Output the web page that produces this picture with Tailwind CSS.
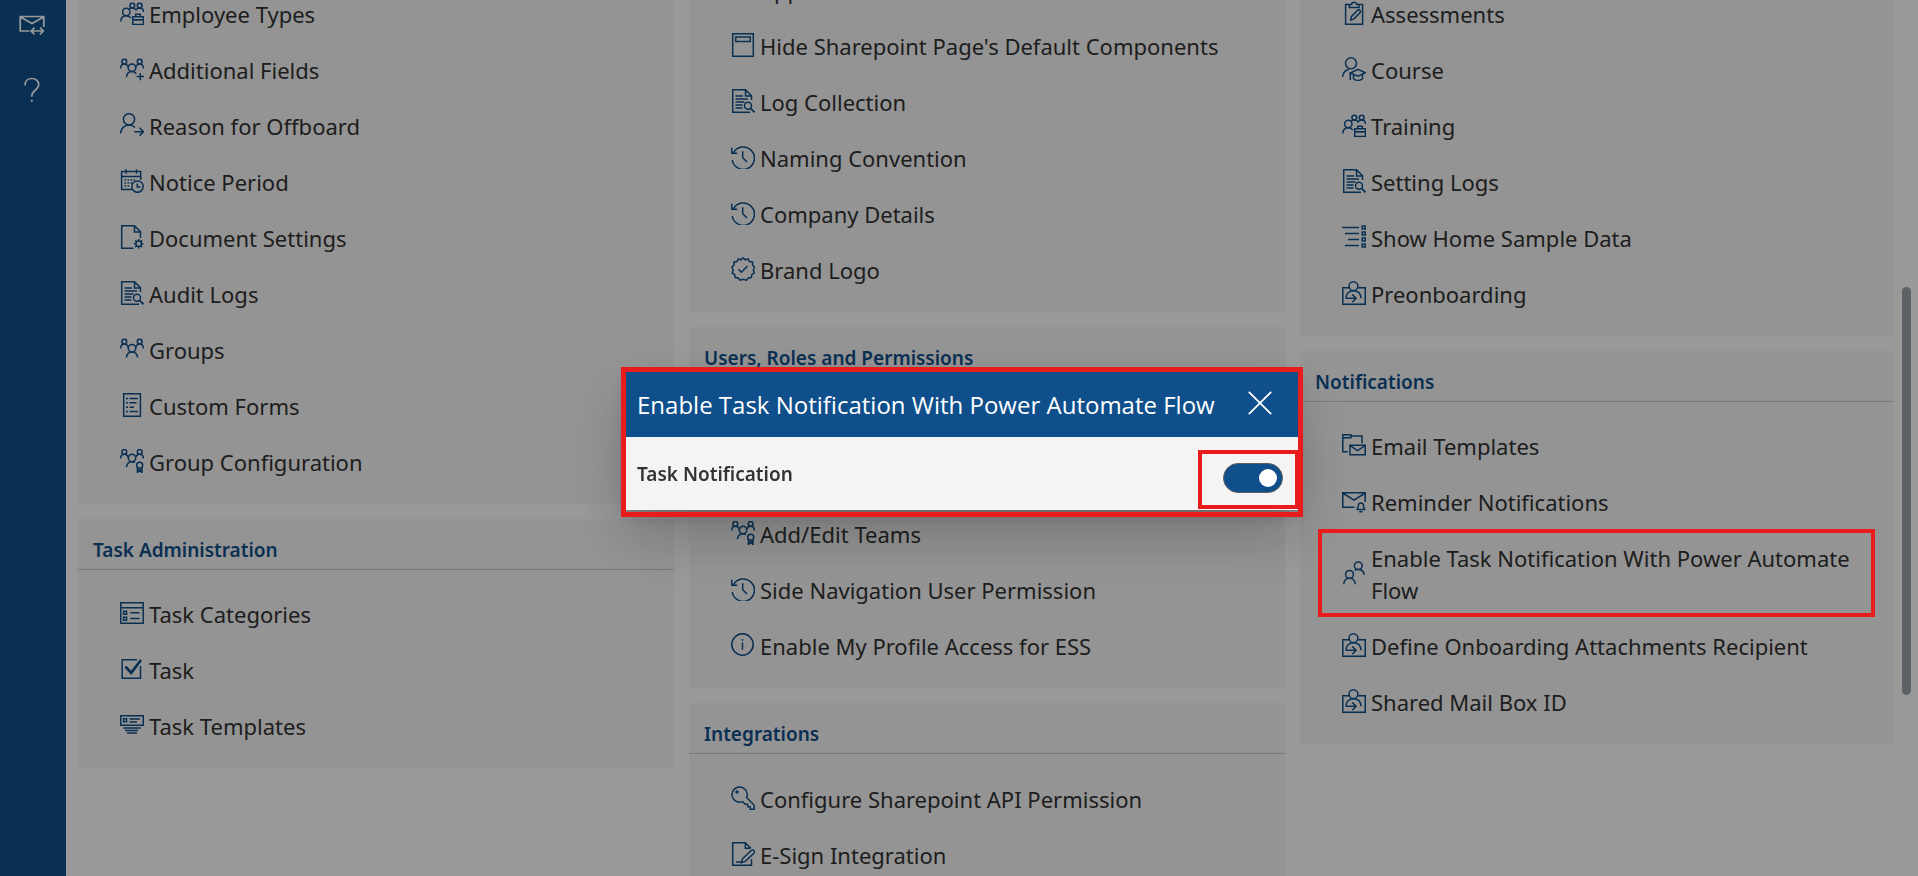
<!DOCTYPE html>
<html lang="en">
<head>
<meta charset="utf-8">
<meta name="viewport" content="width=device-width, initial-scale=1">
<title>Settings</title>
<script src="https://cdn.jsdelivr.net/npm/@tailwindcss/browser@4"></script>
</head>
<body class="h-screen overflow-hidden bg-white font-['Noto_Sans','Open_Sans',sans-serif] text-[#333]">

<svg class="hidden" aria-hidden="true">
  <symbol id="i-team-case" viewBox="0 0 24 24"><circle cx="12.3" cy="4.6" r="2.4"/><circle cx="19.7" cy="4.6" r="2.4"/><circle cx="6.3" cy="11" r="3.7"/><path d="M.6 20.6c.3-3.4 2.500-5.900 5.700-5.900 2 0 3.600.9 4.600 2.400M8.800 8.300C9.500 7.500 10.900 7 12.300 7c1.600 0 2.900.7 3.700 1.900C16.800 7.700 18.100 7 19.700 7c2.200 0 3.700 1.500 3.800 4M12.800 15.700h10.600v7.700H12.800zM15.700 15.500v-2.300h4.600v2.300M12.800 18.700h10.600M16.300 18v2M20 18v2"/></symbol>
  <symbol id="i-team" viewBox="0 0 24 24"><circle cx="4.300" cy="4.600" r="2.400"/><circle cx="19.700" cy="4.600" r="2.400"/><circle cx="12" cy="11.300" r="3.800"/><path d="M.6 11.500C.7 8.900 2.200 7 4.300 7c1.800 0 3.200 1 3.800 3M23.400 11.500C23.300 8.900 21.800 7 19.700 7c-1.800 0-3.200 1-3.800 3M6.400 20.700c.4-3.300 2.600-5.600 5.600-5.600s5.200 2.300 5.600 5.600"/></symbol>
  <symbol id="i-team-plus" viewBox="0 0 24 24"><circle cx="4.300" cy="4.600" r="2.400"/><circle cx="19.700" cy="4.600" r="2.400"/><circle cx="12" cy="10.800" r="3.800"/><path d="M.6 11.500C.7 8.900 2.200 7 4.300 7c1.800 0 3.200 1 3.800 3M23.400 11.500C23.300 8.900 21.800 7 19.700 7c-1.800 0-3.200 1-3.800 3M6.400 20.200c.4-3.300 2.600-5.600 5.600-5.600 1.900 0 3.300.8 4.300 2.200M16.600 19.600H24M20.300 15.900v7.400"/></symbol>
  <symbol id="i-team-award" viewBox="0 0 24 24"><circle cx="4.300" cy="2.900" r="2.400"/><circle cx="19.700" cy="2.900" r="2.400"/><circle cx="12" cy="9" r="3.700"/><path d="M.6 9.500C.7 7 2.200 5.300 4.300 5.300c1.800 0 3.200 1 3.800 2.700M23.400 9.500C23.300 7 21.800 5.300 19.700 5.300c-1.800 0-3.200 1-3.800 2.700M6.400 18.200c.4-3.200 2.600-5.400 5.600-5.400 1.100 0 2.100.3 2.900.8"/><circle cx="19.700" cy="16.200" r="3"/><path d="M17.400 18.500v4.900l2.300-1.700 2.300 1.700v-4.900M17.400 21h4.600"/></symbol>
  <symbol id="i-user-out" viewBox="0 0 24 24"><circle cx="9" cy="6.300" r="5.600"/><path d="M.6 20.400C.8 15.500 4.300 12 9 12c2.400 0 4.600 1 6 2.600M14.300 18.700h9M19.600 14.800l3.900 3.900-3.900 3.900"/></symbol>
  <symbol id="i-calendar" viewBox="0 0 24 24"><path d="M12 20.400H1.600V2.600h19.100V11M1.600 7.400h19.100M6 .3v4.400M16.500.3v4.400"/><path stroke-dasharray="1.600 1.400" d="M4.500 11h10.600M4.500 14h8M4.500 17h6"/><circle cx="17.500" cy="17.600" r="5.700"/><path d="M17.300 14.400v3.500h3.200"/></symbol>
  <symbol id="i-doc-gear" viewBox="0 0 24 24"><path d="M13.500 23.200H1.700V.8h12.800l6 6V13M14.500.8v6.100h6"/><circle cx="18.700" cy="18.800" r="2.800"/><path d="M18.700 14v2M18.700 21.600v2M13.900 18.800h2M21.500 18.800h2M15.300 15.400l1.400 1.400M20.700 20.800l1.400 1.400M22.100 15.400l-1.400 1.400M16.700 20.800l-1.400 1.400"/></symbol>
  <symbol id="i-doc-search" viewBox="0 0 24 24"><path d="M19 23.200H1.700V.8h12.800l6 6V11M14.500.8v6.100h6M4.500 7h7.500M4.500 10h12.500M4.500 13h9M4.500 16h7M4.500 19h7"/><circle cx="17" cy="16.800" r="3.500"/><path stroke-width="1.700" d="m19.600 19.400 3.900 3.900"/></symbol>
  <symbol id="i-form" viewBox="0 0 24 24"><path d="M3.700.8h16.700v22.400H3.700zM6 5.500h2M9.500 5.500H18M6 9.800h2M9.500 9.800h7M6 14.200h2M9.500 14.200h4.500M6 18.500h2M9.500 18.500H18"/></symbol>
  <symbol id="i-categories" viewBox="0 0 24 24"><path d="M.8 1.700h22.400v20.600H.8zM.8 6.800h22.400M3.600 10.300h3v3h-3zM3.600 16.300h3v3h-3zM10.300 11.700h9.200M10.300 17.600h9.200"/></symbol>
  <symbol id="i-check" viewBox="0 0 24 24"><path d="M17 2.700H2.200v18.600h18.300V9"/><path stroke-width="2.800" d="m5.500 9.600 5.700 6.200L21 3"/></symbol>
  <symbol id="i-templates" viewBox="0 0 24 24"><path d="M.8 2.700h22.400v9.600H.8zM3.600 5.700h3v3h-3zM9.500 6H20M9.500 9H17M3.200 15h17.600M5 17.600h13M7 20h10"/></symbol>
  <symbol id="i-page" viewBox="0 0 24 24"><path d="M1.700.8h20.600v22.400H1.700zM4.700 3.900h14.600v4.700H4.700z"/></symbol>
  <symbol id="i-history" viewBox="0 0 24 24"><path d="M2.300 8A11.200 11.200 0 1 1 1.200 15M.8 2.700v5.500h5.500M11.700 6.200v6.500l4.300 4.300"/></symbol>
  <symbol id="i-badge" viewBox="0 0 24 24"><path d="m12 .8 2.300 2 2.900-.9 1.300 2.600 3 .5.100 3 2 2.200-1.300 2.800 1 2.900-2.500 1.700-.5 3-3 .3-1.900 2.300L12 22.300l-2.900.9-1.900-2.300-3-.3-.5-3-2.500-1.700 1-2.900L.900 10.200l2-2.200.1-3 3-.5 1.300-2.600 2.900.9z"/><path d="m7.500 12.200 3 3 6-6.200"/></symbol>
  <symbol id="i-info" viewBox="0 0 24 24"><circle cx="11.500" cy="11.500" r="10.700"/><path d="M11.500 9.500v7.200M11.500 6v1.700"/></symbol>
  <symbol id="i-key" viewBox="0 0 24 24"><path d="M15.700 11.600 23.200 19.300v3.900h-4v-2.500h-2.500v-2.500h-2.600l-2.500-2.600c-1.100.5-2.300.6-3.400.6A7.600 7.600 0 1 1 16.200 8.500c0 1.100-.1 2.200-.5 3.100z"/><circle cx="6" cy="6" r="1"/></symbol>
  <symbol id="i-sign" viewBox="0 0 24 24"><path d="M20.500 17v6.200H1.700V.8h12.600l5.500 5.500M14.300.8v5.400h5.500M11.500 16.800l8.800-8.300c.8-.8 2-.8 2.700 0 .7.800.7 1.900-.1 2.700l-8.600 8.200-4 1.200zM5 20h5"/></symbol>
  <symbol id="i-clipboard" viewBox="0 0 24 24"><path d="M9 3.500H3.600v19.700h17V3.500h-5.400M7.300 6.600V3.500h2.200a2.700 2.700 0 0 1 5.300 0H17v3.100zM8.700 19l.8-3.600 6.200-6.200c1.700-1 3.300.7 2.500 2.400L12 17.900z"/></symbol>
  <symbol id="i-course" viewBox="0 0 24 24"><circle cx="9" cy="6.300" r="5.500"/><path d="M.6 20c.3-4 2.700-6.700 6.400-7.700M8.300 16l7.700-3.600 7.400 3.300-7.400 3.500zM8.300 16v7M11.500 17.500v4.200c2.600 2.200 6.400 2.200 9 0v-4.500"/></symbol>
  <symbol id="i-list-right" viewBox="0 0 24 24"><path d="M0 2.500h17M3 8.500h14M6 14.500h11M3 20.500h14M20.200 1h3v3h-3zM20.200 7h3v3h-3zM20.200 13h3v3h-3zM20.200 19h3v3h-3z"/></symbol>
  <symbol id="i-onboard" viewBox="0 0 24 24"><circle cx="11.500" cy="5.200" r="4.400"/><path d="M7.300 6.700H.8v16.500h22.400V6.700h-7.100M4 16.500c.4-4 3.300-6.800 7.500-6.800 4.400 0 7.300 3 7.600 7.600M3.500 17.300h10.300M10.200 13.400l3.900 3.900-3.900 3.900"/></symbol>
  <symbol id="i-folder-mail" viewBox="0 0 24 24"><path d="M5.700 18.800H.8V1.700h8.100v3H.8M8.900 3H20v7.300M8 12.200h15.200v9.600H8zM8 12.500l7.600 5.200 7.600-5.200"/></symbol>
  <symbol id="i-mail-bell" viewBox="0 0 24 24"><path d="M12.500 18.300H.8V3.700h22.400V13M.8 4l11.200 7.200L23.200 4M15.300 20.600v-1.300c.8-.5 1-1.300 1-2.500 0-1.700 1-2.900 2.600-2.900s2.600 1.200 2.600 2.900c0 1.200.2 2 1 2.500v1.300zM17.300 22.800h3.200"/></symbol>
  <symbol id="i-users" viewBox="0 0 24 24"><circle cx="16.300" cy="4.800" r="3.900"/><circle cx="7.500" cy="13.400" r="3.900"/><path d="M1.700 23.300c.3-3.500 2.600-6 5.800-6s5.500 2.500 5.800 6M12.500 9.500a6 6 0 0 1 9.700 4.300"/></symbol>
</svg>

<div class="flex h-full">
  <nav aria-label="Main" class="flex w-[66px] shrink-0 flex-col items-center gap-9 bg-[#0f4f8b] pt-3 pr-0.5 text-white">
    <a href="#" aria-label="Mail transfer" class="block">
      <svg class="size-[26px] fill-none stroke-current" viewBox="0 0 26 26" stroke-width="1.700"><path d="M10.500 19H1.200V4.500h23.600V15M1.500 5 13 11.500 24.500 5M12.500 19h11.500M15.500 15.700 12.200 19l3.300 3.300M21 15.700l3.300 3.300-3.300 3.300"/></svg>
    </a>
    <a href="#" aria-label="Help" class="block pt-[3px]">
      <svg class="size-[26px] fill-none stroke-current" viewBox="0 0 26 26" stroke-width="1.700"><path d="M6.200 8.500V7.300C6.300 3.800 9 1.500 12.800 1.500c3.900 0 6.900 2.500 6.900 6 0 5.700-6.900 5.800-6.900 11.500v.8"/><path stroke-width="1.900" d="M12.800 22.800v2"/></svg>
    </a>
  </nav>

  <main class="relative min-w-0 flex-1 overflow-hidden">
    <div class="grid grid-cols-3 items-start gap-[15px] pr-[22px] pl-3">

      <div class="-mt-[14px] flex flex-col gap-[15px]">
        <section class="bg-[#f7f7f7]">
          <ul class="px-[18px] pb-[14px] text-[22px] leading-8 [&_svg]:mb-0.5 [&_svg]:size-6 [&_svg]:shrink-0 [&_svg]:fill-none [&_svg]:stroke-[#0f4f8b] [&_svg]:stroke-[1.5]">
            <li><a href="#" class="flex items-center gap-[5px] py-3 pr-2 pl-6"><svg><use href="#i-team-case"/></svg>Employee Types</a></li>
            <li><a href="#" class="flex items-center gap-[5px] py-3 pr-2 pl-6"><svg><use href="#i-team-plus"/></svg>Additional Fields</a></li>
            <li><a href="#" class="flex items-center gap-[5px] py-3 pr-2 pl-6"><svg><use href="#i-user-out"/></svg>Reason for Offboard</a></li>
            <li><a href="#" class="flex items-center gap-[5px] py-3 pr-2 pl-6"><svg><use href="#i-calendar"/></svg>Notice Period</a></li>
            <li><a href="#" class="flex items-center gap-[5px] py-3 pr-2 pl-6"><svg><use href="#i-doc-gear"/></svg>Document Settings</a></li>
            <li><a href="#" class="flex items-center gap-[5px] py-3 pr-2 pl-6"><svg><use href="#i-doc-search"/></svg>Audit Logs</a></li>
            <li><a href="#" class="flex items-center gap-[5px] py-3 pr-2 pl-6"><svg><use href="#i-team"/></svg>Groups</a></li>
            <li><a href="#" class="flex items-center gap-[5px] py-3 pr-2 pl-6"><svg><use href="#i-form"/></svg>Custom Forms</a></li>
            <li><a href="#" class="flex items-center gap-[5px] py-3 pr-2 pl-6"><svg><use href="#i-team-award"/></svg>Group Configuration</a></li>
          </ul>
        </section>
        <section class="bg-[#f7f7f7]">
          <h2 class="border-b border-[#c8c8c8] px-[15px] pt-[17px] pb-[5px] text-[19px] leading-7 font-semibold text-[#0f4f8b]">Task Administration</h2>
          <ul class="px-[18px] pt-4 pb-[14px] text-[22px] leading-8 [&_svg]:mb-0.5 [&_svg]:size-6 [&_svg]:shrink-0 [&_svg]:fill-none [&_svg]:stroke-[#0f4f8b] [&_svg]:stroke-[1.5]">
            <li><a href="#" class="flex items-center gap-[5px] py-3 pr-2 pl-6"><svg><use href="#i-categories"/></svg>Task Categories</a></li>
            <li><a href="#" class="flex items-center gap-[5px] py-3 pr-2 pl-6"><svg><use href="#i-check"/></svg>Task</a></li>
            <li><a href="#" class="flex items-center gap-[5px] py-3 pr-2 pl-6"><svg><use href="#i-templates"/></svg>Task Templates</a></li>
          </ul>
        </section>
      </div>

      <div class="-mt-[38px] flex flex-col gap-[15px]">
        <section class="bg-[#f7f7f7]">
          <ul class="px-[18px] pb-[14px] text-[22px] leading-8 [&_svg]:mb-0.5 [&_svg]:size-6 [&_svg]:shrink-0 [&_svg]:fill-none [&_svg]:stroke-[#0f4f8b] [&_svg]:stroke-[1.5]">
            <li><a href="#" class="flex items-center gap-[5px] py-3 pr-2 pl-6"><svg><use href="#i-team"/></svg>Applications</a></li>
            <li><a href="#" class="flex items-center gap-[5px] py-3 pr-2 pl-6"><svg><use href="#i-page"/></svg>Hide Sharepoint Page's Default Components</a></li>
            <li><a href="#" class="flex items-center gap-[5px] py-3 pr-2 pl-6"><svg><use href="#i-doc-search"/></svg>Log Collection</a></li>
            <li><a href="#" class="flex items-center gap-[5px] py-3 pr-2 pl-6"><svg><use href="#i-history"/></svg>Naming Convention</a></li>
            <li><a href="#" class="flex items-center gap-[5px] py-3 pr-2 pl-6"><svg><use href="#i-history"/></svg>Company Details</a></li>
            <li><a href="#" class="flex items-center gap-[5px] py-3 pr-2 pl-6"><svg><use href="#i-badge"/></svg>Brand Logo</a></li>
          </ul>
        </section>
        <section class="bg-[#f7f7f7]">
          <h2 class="border-b border-[#c8c8c8] px-[15px] pt-[17px] pb-[5px] text-[19px] leading-7 font-semibold text-[#0f4f8b]">Users, Roles and Permissions</h2>
          <ul class="px-[18px] pt-32 pb-[14px] text-[22px] leading-8 [&_svg]:mb-0.5 [&_svg]:size-6 [&_svg]:shrink-0 [&_svg]:fill-none [&_svg]:stroke-[#0f4f8b] [&_svg]:stroke-[1.5]">
            <li><a href="#" class="flex items-center gap-[5px] py-3 pr-2 pl-6"><svg><use href="#i-team-award"/></svg>Add/Edit Teams</a></li>
            <li><a href="#" class="flex items-center gap-[5px] py-3 pr-2 pl-6"><svg><use href="#i-history"/></svg>Side Navigation User Permission</a></li>
            <li><a href="#" class="flex items-center gap-[5px] py-3 pr-2 pl-6"><svg><use href="#i-info"/></svg>Enable My Profile Access for ESS</a></li>
          </ul>
        </section>
        <section class="bg-[#f7f7f7]">
          <h2 class="border-b border-[#c8c8c8] px-[15px] pt-[17px] pb-[5px] text-[19px] leading-7 font-semibold text-[#0f4f8b]">Integrations</h2>
          <ul class="px-[18px] pt-[17px] pb-[14px] text-[22px] leading-8 [&_svg]:mb-0.5 [&_svg]:size-6 [&_svg]:shrink-0 [&_svg]:fill-none [&_svg]:stroke-[#0f4f8b] [&_svg]:stroke-[1.5]">
            <li><a href="#" class="flex items-center gap-[5px] py-3 pr-2 pl-6"><svg><use href="#i-key"/></svg>Configure Sharepoint API Permission</a></li>
            <li><a href="#" class="flex items-center gap-[5px] py-3 pr-2 pl-6"><svg><use href="#i-sign"/></svg>E-Sign Integration</a></li>
          </ul>
        </section>
      </div>

      <div class="-mt-[14px] mr-[3px] flex flex-col gap-[15px]">
        <section class="bg-[#f7f7f7]">
          <ul class="px-[18px] pb-[14px] text-[22px] leading-8 [&_svg]:mb-0.5 [&_svg]:size-6 [&_svg]:shrink-0 [&_svg]:fill-none [&_svg]:stroke-[#0f4f8b] [&_svg]:stroke-[1.5]">
            <li><a href="#" class="flex items-center gap-[5px] py-3 pr-2 pl-6"><svg><use href="#i-clipboard"/></svg>Assessments</a></li>
            <li><a href="#" class="flex items-center gap-[5px] py-3 pr-2 pl-6"><svg><use href="#i-course"/></svg>Course</a></li>
            <li><a href="#" class="flex items-center gap-[5px] py-3 pr-2 pl-6"><svg><use href="#i-team-case"/></svg>Training</a></li>
            <li><a href="#" class="flex items-center gap-[5px] py-3 pr-2 pl-6"><svg><use href="#i-doc-search"/></svg>Setting Logs</a></li>
            <li><a href="#" class="flex items-center gap-[5px] py-3 pr-2 pl-6"><svg><use href="#i-list-right"/></svg>Show Home Sample Data</a></li>
            <li><a href="#" class="flex items-center gap-[5px] py-3 pr-2 pl-6"><svg><use href="#i-onboard"/></svg>Preonboarding</a></li>
          </ul>
        </section>
        <section class="bg-[#f7f7f7]">
          <h2 class="border-b border-[#c8c8c8] px-[15px] pt-[17px] pb-[5px] text-[19px] leading-7 font-semibold text-[#0f4f8b]">Notifications</h2>
          <ul class="px-[18px] pt-4 pb-[14px] text-[22px] leading-8 [&_svg]:mb-0.5 [&_svg]:size-6 [&_svg]:shrink-0 [&_svg]:fill-none [&_svg]:stroke-[#0f4f8b] [&_svg]:stroke-[1.5]">
            <li><a href="#" class="flex items-center gap-[5px] py-3 pr-2 pl-6"><svg><use href="#i-folder-mail"/></svg>Email Templates</a></li>
            <li><a href="#" class="flex items-center gap-[5px] py-3 pr-2 pl-6"><svg><use href="#i-mail-bell"/></svg>Reminder Notifications</a></li>
            <li class="relative"><a href="#" class="flex items-center gap-[5px] py-3 pr-2 pl-6"><svg><use href="#i-users"/></svg>Enable Task Notification With Power Automate Flow</a>
              <span class="pointer-events-none absolute inset-x-0 -top-px bottom-px z-50 border-4 border-[#e81c1c]"></span></li>
            <li><a href="#" class="flex items-center gap-[5px] py-3 pr-2 pl-6"><svg><use href="#i-onboard"/></svg>Define Onboarding Attachments Recipient</a></li>
            <li><a href="#" class="flex items-center gap-[5px] py-3 pr-2 pl-6"><svg><use href="#i-onboard"/></svg>Shared Mail Box ID</a></li>
          </ul>
        </section>
      </div>
    </div>
    <div class="absolute top-[287px] right-[7px] h-[408px] w-[9px] rounded-full bg-[#9aa2ac]"></div>
  </main>
</div>

<div class="fixed inset-0 z-40 flex items-center justify-center bg-black/40 pt-1 pl-[5px]">
  <div role="dialog" aria-modal="true" aria-labelledby="dialog-title" class="relative w-[673px] bg-[#f4f4f4] shadow-[0_26px_58px_rgba(0,0,0,0.22),0_5px_14px_rgba(0,0,0,0.18)]">
    <header class="flex h-[66px] items-center justify-between bg-[#0f4f8b] pt-[3px] pr-[26px] pl-3 text-white">
      <h1 id="dialog-title" class="text-2xl whitespace-nowrap font-['Open_Sans','Noto_Sans',sans-serif]">Enable Task Notification With Power Automate Flow</h1>
      <button type="button" aria-label="Close"><svg class="mb-1 size-6 fill-none stroke-current" viewBox="0 0 24 24" stroke-width="1.800"><path d="m.8.8 22.400 22.400M23.200.8.8 23.200"/></svg></button>
    </header>
    <div class="flex h-[73px] items-center justify-between pt-[3px] pr-[15px] pl-3">
      <label for="task-notification" class="text-[19px] font-semibold">Task Notification</label>
      <input id="task-notification" type="checkbox" role="switch" checked class="mt-[7px] flex h-[30px] w-[60px] appearance-none items-center rounded-full border border-[#605e5c] bg-[#767676] px-[5px] before:size-[18px] before:rounded-full before:bg-white checked:justify-end checked:bg-[#0f4f8b]">
    </div>
    <span class="pointer-events-none absolute -top-1 -right-[5px] -bottom-[7px] -left-1 border-[5px] border-[#e81c1c]"></span>
    <span class="pointer-events-none absolute -right-px bottom-px h-[59px] w-[101px] border-4 border-[#e81c1c]"></span>
  </div>
</div>
</body>
</html>
